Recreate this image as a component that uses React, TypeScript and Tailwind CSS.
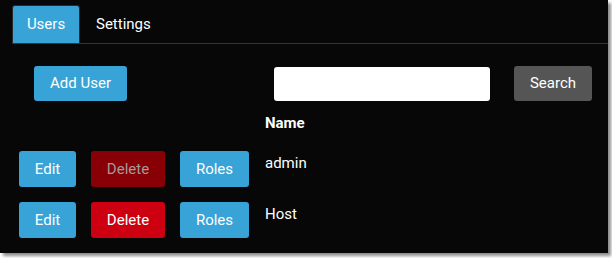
import React from 'react';

interface User {
  name: string;
  canDelete: boolean;
}

const users: User[] = [
  { name: 'admin', canDelete: false },
  { name: 'Host', canDelete: true },
];

function Btn({ children, className }: { children: React.ReactNode; className: string }) {
  return (
    <button className={`h-[35px] rounded-[3px] text-[15px] leading-none ${className}`}>{children}</button>
  );
}

export default function App() {
  return (
    <div className="w-[612px] h-[258px] bg-white" style={{ fontFamily: 'Roboto, "Liberation Sans", sans-serif' }}>
      <div className="w-[608px] h-[253px] bg-[#070707] shadow-[3px_3px_3px_rgba(0,0,0,0.45)] overflow-hidden">
        {/* tabs */}
        <div className="flex items-end pt-[5px] pl-[12px]">
          <div className="h-[38px] w-[68px] flex items-center justify-center rounded-t-[3px] border border-b-0 border-[#2a2a2a] bg-[#38a3d7] text-white text-[15px]">
            Users
          </div>
          <div className="h-[38px] px-[16px] flex items-center text-white text-[15px]">Settings</div>
        </div>
        <div className="ml-[12px] h-px bg-[#343434]" />

        {/* toolbar */}
        <div className="flex items-center mt-[22px] h-[35px]">
          <Btn className="ml-[34px] w-[93px] bg-[#38a3d7] text-white">Add User</Btn>
          <input className="ml-[147px] w-[216px] h-[34px] rounded-[3px] bg-white outline-none" />
          <Btn className="ml-[24px] w-[78px] bg-[#555555] text-white">Search</Btn>
        </div>

        {/* table */}
        <div className="mt-[12px] pl-[265px] text-white font-bold text-[15px] leading-[20px]">Name</div>
        <div className="mt-[18px] flex flex-col gap-[15px]">
          {users.map((u) => (
            <div key={u.name} className="flex items-start pl-[19px]">
              <Btn className="h-[36px] w-[57px] bg-[#38a3d7] text-white">Edit</Btn>
              <Btn
                className={`h-[36px] ml-[15px] w-[74px] ${u.canDelete ? 'bg-[#cc0010] text-white' : 'bg-[#880006] text-[#a59a9a]'}`}
              >
                Delete
              </Btn>
              <Btn className="h-[36px] ml-[15px] w-[69px] bg-[#38a3d7] text-white">Roles</Btn>
              <div className="ml-[16px] pt-[2px] text-white text-[15px] leading-[20px]">{u.name}</div>
            </div>
          ))}
        </div>
      </div>
    </div>
  );
}
